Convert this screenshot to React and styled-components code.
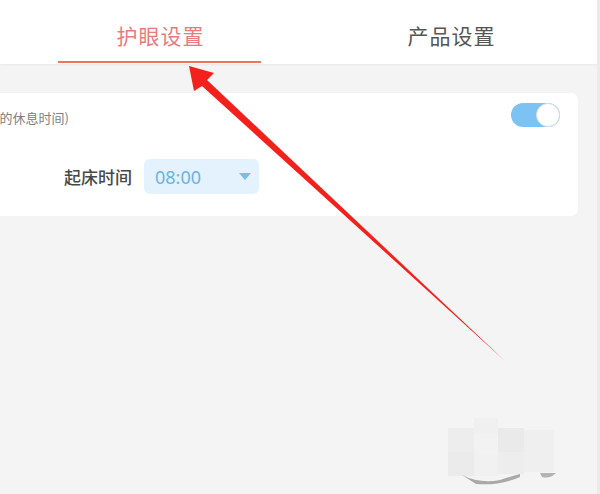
import React from "react";
import styled, { createGlobalStyle } from "styled-components";

const Global = createGlobalStyle`
  html, body { margin: 0; padding: 0; }
  body {
    width: 600px;
    height: 494px;
    overflow: hidden;
    background: #f4f4f4;
    font-family: "Noto Sans CJK SC", "Noto Sans", sans-serif;
  }
`;

const Page = styled.div`
  position: relative;
  width: 600px;
  height: 494px;
  overflow: hidden;
  background: #f4f4f4;
  border-right: 3px solid #ebebeb;
  box-sizing: border-box;
`;

const Header = styled.div`
  height: 64px;
  background: #fff;
  display: flex;
  padding-left: 15px;
  box-shadow: 0 1px 2px rgba(0, 0, 0, 0.05);
`;

const Tab = styled.div`
  width: 292px;
  height: 64px;
  box-sizing: border-box;
  padding-top: 6px;
  display: flex;
  align-items: center;
  justify-content: center;
  position: relative;
  font-size: 21px;
  letter-spacing: 1px;
  color: ${(p) => (p.$active ? "#e97b80" : "#555")};
  &::after {
    content: "";
    display: ${(p) => (p.$active ? "block" : "none")};
    position: absolute;
    left: 43px;
    bottom: 1px;
    width: 203px;
    height: 2px;
    background: #ef735f;
  }
`;

const Body = styled.div`
  padding-top: 29px;
`;

const Card = styled.div`
  margin-left: -200px;
  width: 778px;
  height: 123px;
  box-sizing: border-box;
  background: #fff;
  border-radius: 7px;
  padding: 10px 18px 0 0;
  display: flex;
  flex-direction: column;
`;

const TopRow = styled.div`
  display: flex;
  align-items: center;
  justify-content: space-between;
  height: 24px;
`;

const Hint = styled.div`
  width: 269px;
  text-align: right;
  font-size: 13px;
  color: #808080;
  white-space: nowrap;
  margin-top: 4px;
`;

const Toggle = styled.div`
  width: 49px;
  height: 24px;
  border-radius: 12px;
  background: #7cc3f4;
  display: flex;
  justify-content: flex-end;
`;

const Knob = styled.div`
  width: 24px;
  height: 24px;
  box-sizing: border-box;
  border-radius: 50%;
  background: #fff;
  border: 1px solid #d6dde2;
`;

const FieldRow = styled.div`
  width: 459px;
  margin-top: 32px;
  display: flex;
  align-items: center;
  justify-content: flex-end;
  gap: 12px;
`;

const Label = styled.div`
  font-size: 17px;
  font-weight: 500;
  color: #484848;
`;

const Select = styled.div`
  width: 115px;
  height: 35px;
  box-sizing: border-box;
  border-radius: 6px;
  background: #e3f2fd;
  display: flex;
  align-items: center;
  justify-content: space-between;
  padding: 0 8px 0 11px;
  font-family: "Noto Sans", sans-serif;
  font-size: 18px;
  color: #6cb2e6;
`;

const Caret = styled.span`
  width: 0;
  height: 0;
  border-left: 6px solid transparent;
  border-right: 6px solid transparent;
  border-top: 7px solid #7bbbe8;
`;

const Overlay = styled.svg`
  position: absolute;
  left: 0;
  top: 0;
  pointer-events: none;
`;

export default function App() {
  return (
    <>
      <Global />
      <Page>
        <Header>
          <Tab $active>护眼设置</Tab>
          <Tab>产品设置</Tab>
        </Header>
        <Body>
          <Card>
            <TopRow>
              <Hint>的休息时间)</Hint>
              <Toggle>
                <Knob />
              </Toggle>
            </TopRow>
            <FieldRow>
              <Label>起床时间</Label>
              <Select>
                <span>08:00</span>
                <Caret />
              </Select>
            </FieldRow>
          </Card>
        </Body>
        <Overlay width="600" height="494" viewBox="0 0 600 494">
          <g>
            <rect x="448" y="428" width="26" height="24" fill="#ededed" />
            <rect x="474" y="418" width="24" height="16" fill="#f0f0f0" />
            <rect x="474" y="434" width="24" height="20" fill="#f2f2f2" />
            <rect x="498" y="428" width="26" height="24" fill="#eaeaea" />
            <rect x="524" y="430" width="30" height="22" fill="#efefef" />
            <rect x="448" y="452" width="26" height="24" fill="#ebebeb" />
            <rect x="474" y="454" width="24" height="22" fill="#f1f1f1" />
            <rect x="498" y="452" width="26" height="22" fill="#ededed" />
            <rect x="524" y="452" width="30" height="20" fill="#efefef" />
          </g>
          <path d="M462 475 Q480 484 500 480 Q512 476 520 474 L520 477 Q500 486 476 484 Z" fill="#a9a9a9" />
          <path d="M540 473 L556 473 Q550 479 542 477 Z" fill="#b3b3b3" />
          <polygon
            points="189,66 214,73 207,80 505,361 202,86 194,91"
            fill="#f4201b"
          />
        </Overlay>
      </Page>
    </>
  );
}
